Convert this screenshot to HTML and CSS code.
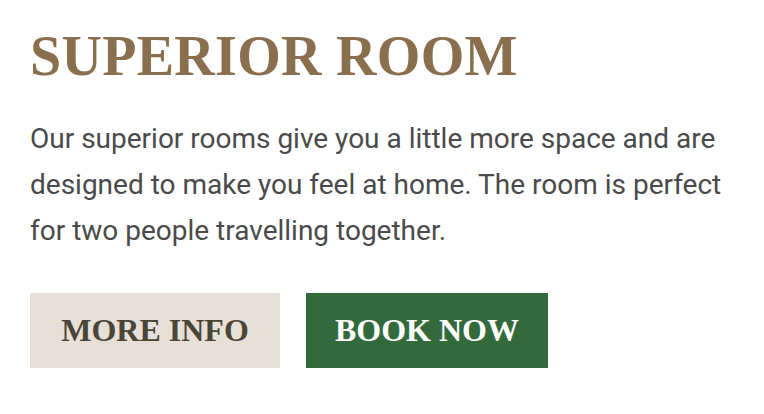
FILE: index.html
```html
<!DOCTYPE html>
<html>
<head>
<meta charset="utf-8">
<link rel="stylesheet" href="styles.css">
</head>
<body>
<section class="room">
  <h1 class="room-title">SUPERIOR ROOM</h1>
  <p class="room-desc">Our superior rooms give you a little more space and are designed to make you feel at home. The room is perfect for two people travelling together.</p>
  <div class="actions">
    <a class="btn btn-light" href="#">MORE INFO</a>
    <a class="btn btn-dark" href="#">BOOK NOW</a>
  </div>
</section>
</body>
</html>
```
FILE: styles.css
```css
html, body { margin: 0; padding: 0; background: #fff; }
.room { padding: 24px 30px 0 30px; width: 704px; }
.room-title {
  margin: 0;
  font-family: "Liberation Serif", "Times New Roman", serif;
  font-weight: 700;
  font-size: 56px;
  line-height: 64px;
  letter-spacing: 0.3px;
  color: #8a6f4e;
}
.room-desc {
  margin: 28px 0 0 0;
  font-family: Roboto, "Liberation Sans", sans-serif;
  font-size: 28px;
  line-height: 46px;
  color: #4a4a4a;
}
.actions { display: flex; gap: 26px; margin-top: 39px; }
.btn {
  display: flex; align-items: center; justify-content: center;
  height: 75px;
  text-decoration: none;
  font-family: "Liberation Serif", "Times New Roman", serif;
  font-weight: 700;
  font-size: 32px;
}
.btn-light { width: 250px; background: #e6e0d9; color: #4a4536; }
.btn-dark { width: 242px; background: #336a3c; color: #fff; }
```
